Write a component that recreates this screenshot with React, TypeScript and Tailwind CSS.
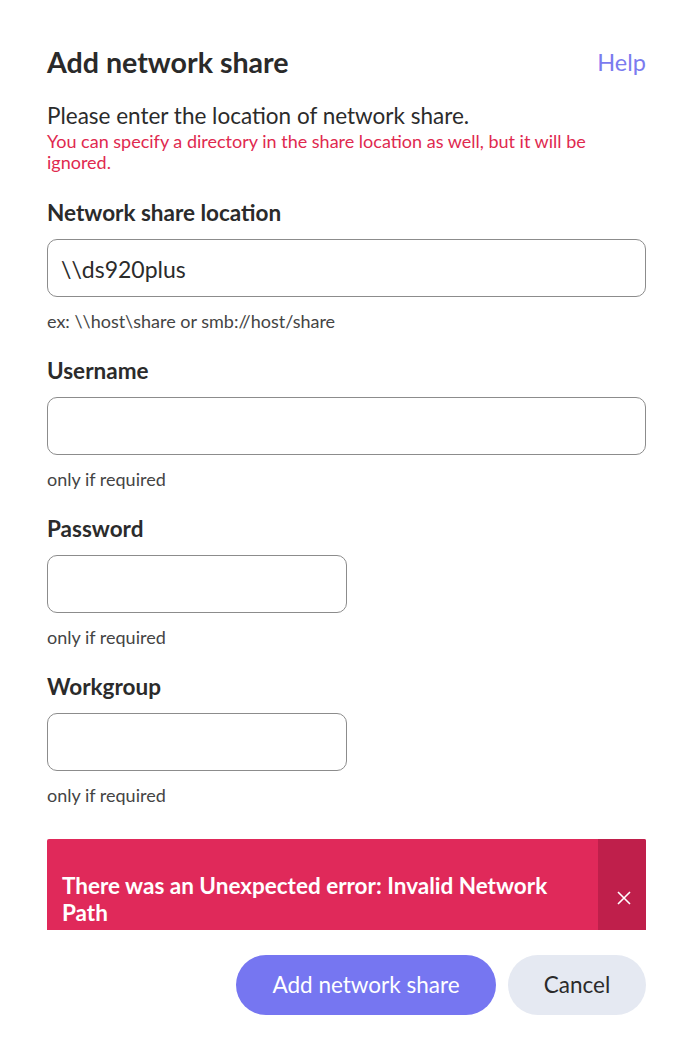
import React from "react";

function Field({ label, hint, value, narrow }: { label: string; hint: string; value?: string; narrow?: boolean }) {
  return (
    <div className="flex flex-col">
      <div className="text-[22.5px] leading-[26px] font-bold text-[#2b2b2b]">{label}</div>
      <div
        className={`mt-[13px] h-[58px] rounded-[10px] border border-[#8c8c8c] flex items-center pl-[13px] pt-[2px] text-[23px] text-[#2b2b2b] ${narrow ? "w-[300px]" : "w-full"}`}
      >
        {value}
      </div>
      <div className="mt-[14px] text-[18px] leading-[20px] text-[#444]">{hint}</div>
    </div>
  );
}

export default function App() {
  return (
    <div
      className="w-[690px] h-[1060px] bg-white pl-[47px] pr-[44px] pt-[46px] flex flex-col"
      style={{ fontFamily: "Lato, 'Noto Sans', sans-serif" }}
    >
      <div className="flex items-center justify-between h-[32px]">
        <div className="text-[28.6px] font-bold text-[#2a2a2a] leading-[32px]">Add network share</div>
        <div className="text-[23.5px] text-[#7b7bef] leading-[32px]">Help</div>
      </div>
      <div className="mt-[25px] text-[22.5px] leading-[26px] text-[#2b2b2b]">Please enter the location of network share.</div>
      <div className="mt-[2px] text-[18px] leading-[21px] text-[#e0294f] pr-[50px]">
        You can specify a directory in the share location as well, but it will be ignored.
      </div>
      <div className="mt-[27px] flex flex-col gap-[27px]">
        <Field label="Network share location" hint="ex: \\host\share or smb://host/share" value="\\ds920plus" />
        <Field label="Username" hint="only if required" />
        <Field label="Password" hint="only if required" narrow />
        <Field label="Workgroup" hint="only if required" narrow />
      </div>
      <div className="mt-[34px] h-[91px] flex bg-[#e0295a] overflow-hidden rounded-t-[2px]">
        <div className="flex-1 pl-[15px] pt-[33px] pr-[40px] text-[22.5px] leading-[27px] font-bold text-white">
          There was an Unexpected error: Invalid Network Path
        </div>
        <div className="w-[48px] bg-[#bf1f4b] flex items-center justify-center pt-[27px] pl-[3px]">
          <svg width="16" height="16" viewBox="0 0 16 16" fill="none" stroke="white" strokeWidth="1.6">
            <path d="M2 2L14 14M14 2L2 14" />
          </svg>
        </div>
      </div>
      <div className="mt-[25px] flex justify-end gap-[12px]">
        <button className="w-[260px] h-[60px] rounded-full bg-[#7676f1] text-white text-[22.5px]">Add network share</button>
        <button className="w-[138px] h-[60px] rounded-full bg-[#e5e9f2] text-[#2b2b2b] text-[22.5px]">Cancel</button>
      </div>
    </div>
  );
}
